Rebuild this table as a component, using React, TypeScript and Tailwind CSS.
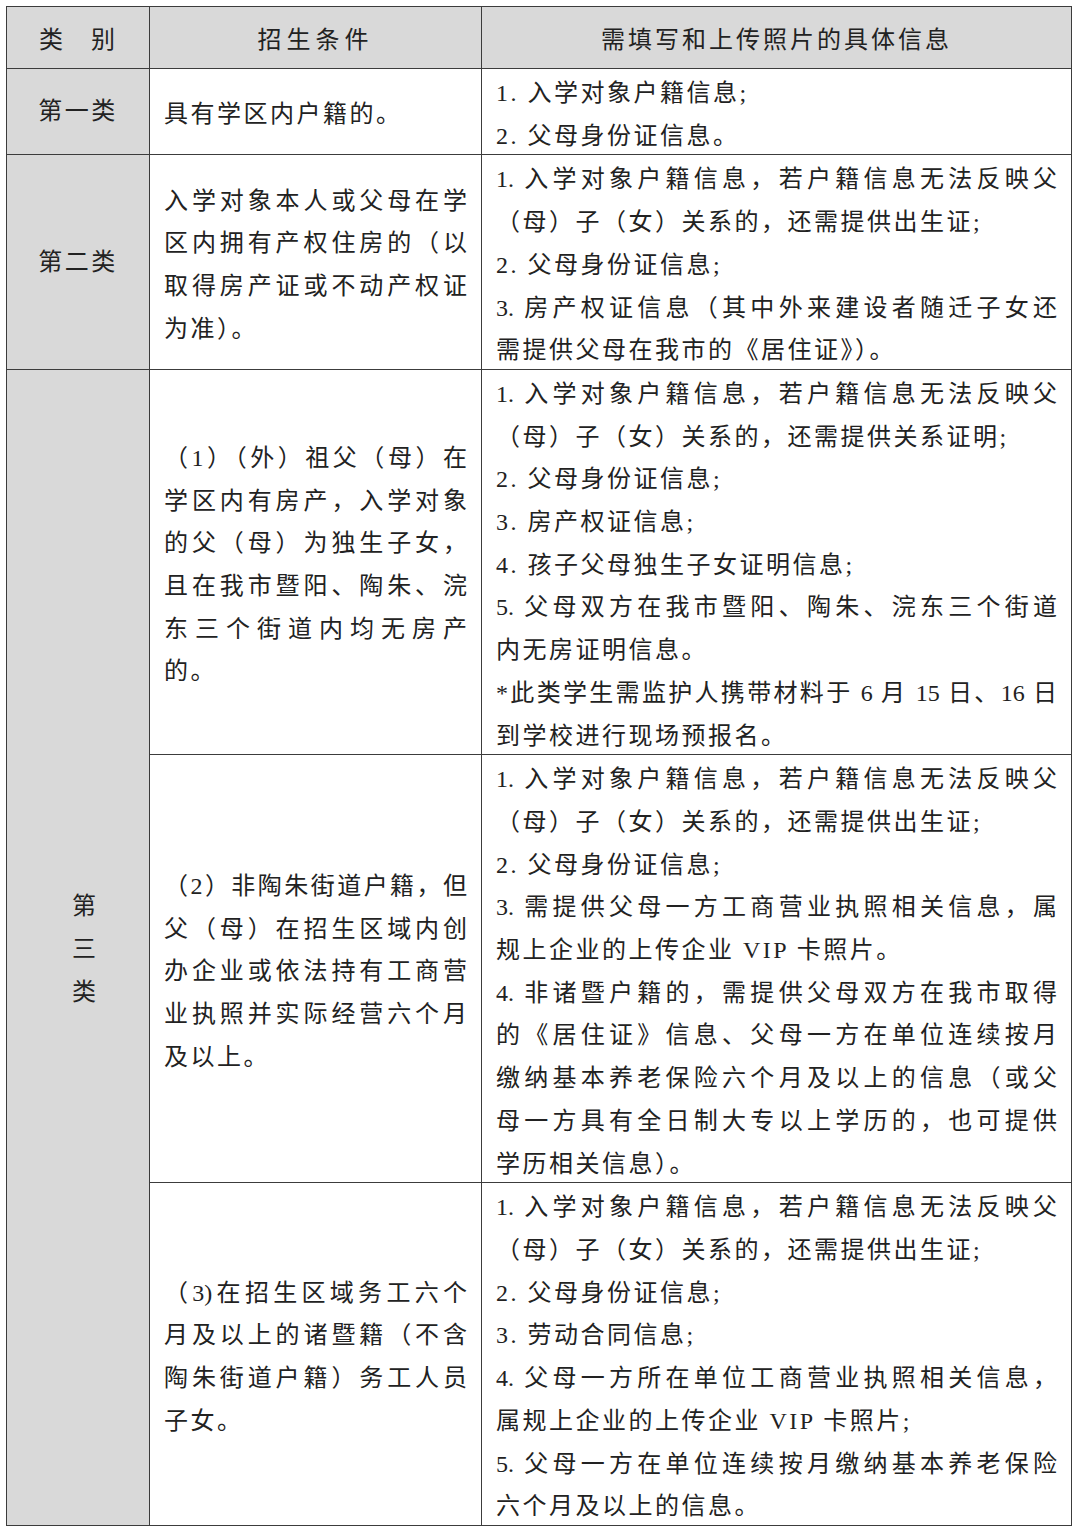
type L = { t: string; f?: boolean };

const font = {
  fontFamily: '"Liberation Serif", "Noto Sans CJK SC", serif',
};

function Lines({ lines }: { lines: L[] }) {
  return (
    <div className="pt-[3px] -mb-[3px]">
      {lines.map((l, i) => (
        <div
          key={i}
          className={
            "whitespace-nowrap " +
            (l.f ? "text-justify [text-align-last:justify]" : "tracking-[2.5px]")
          }
        >
          {l.t}
        </div>
      ))}
    </div>
  );
}

const td = "border-[1.5px] border-[#3c3c3c] px-[14px] py-0 align-middle";
const gray = "bg-[#d9d9d9]";

const row2Cond: L[] = [
  { t: "入学对象本人或父母在学", f: true },
  { t: "区内拥有产权住房的（以", f: true },
  { t: "取得房产证或不动产权证", f: true },
  { t: "为准）。" },
];
const row2Info: L[] = [
  { t: "1. 入学对象户籍信息，若户籍信息无法反映父", f: true },
  { t: "（母）子（女）关系的，还需提供出生证;" },
  { t: "2. 父母身份证信息;" },
  { t: "3. 房产权证信息（其中外来建设者随迁子女还", f: true },
  { t: "需提供父母在我市的《居住证》）。" },
];

const row3aCond: L[] = [
  { t: "（1）（外）祖父（母）在", f: true },
  { t: "学区内有房产，入学对象", f: true },
  { t: "的父（母）为独生子女，", f: true },
  { t: "且在我市暨阳、陶朱、浣", f: true },
  { t: "东三个街道内均无房产", f: true },
  { t: "的。" },
];
const row3aInfo: L[] = [
  { t: "1. 入学对象户籍信息，若户籍信息无法反映父", f: true },
  { t: "（母）子（女）关系的，还需提供关系证明;" },
  { t: "2. 父母身份证信息;" },
  { t: "3. 房产权证信息;" },
  { t: "4. 孩子父母独生子女证明信息;" },
  { t: "5. 父母双方在我市暨阳、陶朱、浣东三个街道", f: true },
  { t: "内无房证明信息。" },
  { t: "*此类学生需监护人携带材料于 6 月 15 日、16 日", f: true },
  { t: "到学校进行现场预报名。" },
];

const row3bCond: L[] = [
  { t: "（2）非陶朱街道户籍，但", f: true },
  { t: "父（母）在招生区域内创", f: true },
  { t: "办企业或依法持有工商营", f: true },
  { t: "业执照并实际经营六个月", f: true },
  { t: "及以上。" },
];
const row3bInfo: L[] = [
  { t: "1. 入学对象户籍信息，若户籍信息无法反映父", f: true },
  { t: "（母）子（女）关系的，还需提供出生证;" },
  { t: "2. 父母身份证信息;" },
  { t: "3. 需提供父母一方工商营业执照相关信息，属", f: true },
  { t: "规上企业的上传企业 VIP 卡照片。" },
  { t: "4. 非诸暨户籍的，需提供父母双方在我市取得", f: true },
  { t: "的《居住证》信息、父母一方在单位连续按月", f: true },
  { t: "缴纳基本养老保险六个月及以上的信息（或父", f: true },
  { t: "母一方具有全日制大专以上学历的，也可提供", f: true },
  { t: "学历相关信息）。" },
];

const row3cCond: L[] = [
  { t: "（3)在招生区域务工六个", f: true },
  { t: "月及以上的诸暨籍（不含", f: true },
  { t: "陶朱街道户籍）务工人员", f: true },
  { t: "子女。" },
];
const row3cInfo: L[] = [
  { t: "1. 入学对象户籍信息，若户籍信息无法反映父", f: true },
  { t: "（母）子（女）关系的，还需提供出生证;" },
  { t: "2. 父母身份证信息;" },
  { t: "3. 劳动合同信息;" },
  { t: "4. 父母一方所在单位工商营业执照相关信息，", f: true },
  { t: "属规上企业的上传企业 VIP 卡照片;" },
  { t: "5. 父母一方在单位连续按月缴纳基本养老保险", f: true },
  { t: "六个月及以上的信息。" },
];

export default function App() {
  return (
    <div className="min-h-[1533px] bg-white pt-[6px] pl-[6px]" style={font}>
      <table className="w-[1065px] table-fixed border-collapse text-[24px] leading-[42.7px] text-[#222]">
        <colgroup>
          <col className="w-[143px]" />
          <col className="w-[332px]" />
          <col className="w-[590px]" />
        </colgroup>
        <thead>
          <tr className="h-[62px]">
            <th className={`${td} ${gray} pt-[5px] text-center font-normal`}>
              <span className="tracking-[2px]">类　别</span>
            </th>
            <th className={`${td} ${gray} pt-[5px] text-center font-normal`}>
              <span className="tracking-[5px]">招生条件</span>
            </th>
            <th className={`${td} ${gray} pt-[5px] text-center font-normal`}>
              <span className="tracking-[3px]">需填写和上传照片的具体信息</span>
            </th>
          </tr>
        </thead>
        <tbody>
          <tr>
            <td className={`${td} ${gray} text-center`}>
              <span className="tracking-[2.5px]">第一类</span>
            </td>
            <td className={td}>
              <Lines lines={[{ t: "具有学区内户籍的。" }]} />
            </td>
            <td className={td}>
              <Lines
                lines={[{ t: "1. 入学对象户籍信息;" }, { t: "2. 父母身份证信息。" }]}
              />
            </td>
          </tr>
          <tr>
            <td className={`${td} ${gray} text-center`}>
              <span className="tracking-[2.5px]">第二类</span>
            </td>
            <td className={td}>
              <Lines lines={row2Cond} />
            </td>
            <td className={td}>
              <Lines lines={row2Info} />
            </td>
          </tr>
          <tr>
            <td rowSpan={3} className={`${td} ${gray} text-center`}>
              <div className="flex flex-col items-center pl-[12px] pt-[4px]">
                <span>第</span>
                <span>三</span>
                <span>类</span>
              </div>
            </td>
            <td className={td}>
              <Lines lines={row3aCond} />
            </td>
            <td className={td}>
              <Lines lines={row3aInfo} />
            </td>
          </tr>
          <tr>
            <td className={td}>
              <Lines lines={row3bCond} />
            </td>
            <td className={td}>
              <Lines lines={row3bInfo} />
            </td>
          </tr>
          <tr>
            <td className={td}>
              <Lines lines={row3cCond} />
            </td>
            <td className={td}>
              <Lines lines={row3cInfo} />
            </td>
          </tr>
        </tbody>
      </table>
    </div>
  );
}
